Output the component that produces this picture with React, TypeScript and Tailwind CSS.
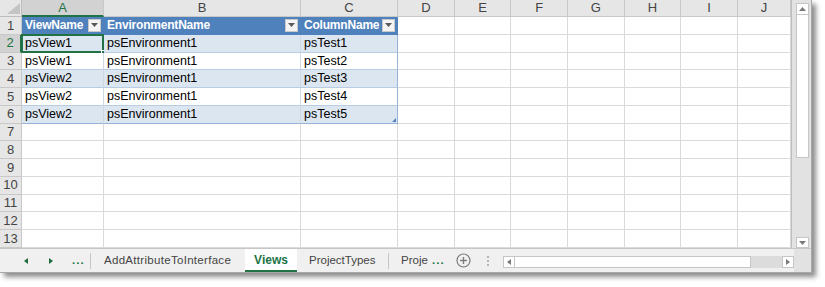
import React from "react"

const COLS = ["A", "B", "C", "D", "E", "F", "G", "H", "I", "J"]

const DATA = [
  ["psView1", "psEnvironment1", "psTest1"],
  ["psView1", "psEnvironment1", "psTest2"],
  ["psView2", "psEnvironment1", "psTest3"],
  ["psView2", "psEnvironment1", "psTest4"],
  ["psView2", "psEnvironment1", "psTest5"],
]

const HEADERS = ["ViewName", "EnvironmentName", "ColumnName"]

function FilterButton() {
  return (
    <div className="ml-auto mr-[2px] w-[13px] h-[13px] bg-[#f4f4f4] border border-[#c9c9c9] flex items-center justify-center shrink-0">
      <svg width="7" height="4" viewBox="0 0 7 4">
        <polygon points="0,0 7,0 3.5,4" fill="#595959" />
      </svg>
    </div>
  )
}

function Grid() {
  const cells: React.ReactNode[] = []

  // header row
  cells.push(
    <div key="corner" className="relative bg-[#e6e6e6] border-r border-b border-[#bdbdbd]">
      <svg className="absolute right-[1px] bottom-[2px]" width="13" height="11" viewBox="0 0 13 11">
        <polygon points="13,0 13,11 0,11" fill="#c4c4c4" />
      </svg>
    </div>
  )
  COLS.forEach((c, i) => {
    cells.push(
      <div
        key={"h" + c}
        className={
          i === 0
            ? "bg-[#d2d2d2] border-r border-[#c8c8c8] border-b-2 border-b-[#217346] flex items-center justify-center text-[13px] text-[#217346]"
            : "bg-[#e6e6e6] border-r border-b border-[#c8c8c8] flex items-center justify-center text-[13px] text-[#444]"
        }
      >
        {c}
      </div>
    )
  })

  for (let r = 1; r <= 13; r++) {
    cells.push(
      <div
        key={"r" + r}
        className={
          r === 2
            ? "bg-[#d2d2d2] border-b border-[#c8c8c8] border-r-2 border-r-[#217346] flex items-center justify-center text-[13px] text-[#217346]"
            : "bg-[#e6e6e6] border-r border-b border-[#c8c8c8] flex items-center justify-center text-[13px] text-[#444]"
        }
      >
        {r}
      </div>
    )
    COLS.forEach((c, ci) => {
      const inTable = ci < 3 && r <= 6
      if (r === 1 && ci < 3) {
        cells.push(
          <div
            key={c + r}
            className="bg-[#4f81bd] border-r border-b border-[#4f81bd] flex items-center pl-[3px] text-[12px] font-bold text-white whitespace-nowrap"
          >
            <span className="tracking-[-0.2px]">{HEADERS[ci]}</span>
            <FilterButton />
          </div>
        )
        return
      }
      if (inTable) {
        const band = r % 2 === 0
        const last = r === 6
        const right = ci === 2
        cells.push(
          <div
            key={c + r}
            className={
              (band ? "bg-[#dce6f1] " : "bg-white ") +
              (last ? "border-b-[#95b3d7] " : "border-b-[#b8cce4] ") +
              (right ? "border-r-[#95b3d7] " : "border-r-[#d0d7e5] ") +
              "relative border-r border-b flex items-center pl-[3px] text-[12.5px] text-black"
            }
          >
            {DATA[r - 2][ci]}
            {r === 2 && ci === 0 && (
              <>
                <div className="absolute left-[-1px] top-[-1px] right-[-1px] bottom-[-1px] border-2 border-[#217346]" />
                <div className="absolute right-[-3px] bottom-[-3px] w-[5px] h-[5px] bg-[#217346] border border-white" />
              </>
            )}
            {last && right && (
              <svg className="absolute right-[1px] bottom-[1px]" width="4" height="4" viewBox="0 0 4 4">
                <polygon points="4,0 4,4 0,4" fill="#4f81bd" />
              </svg>
            )}
          </div>
        )
        return
      }
      cells.push(<div key={c + r} className="bg-white border-r border-b border-[#dadada]" />)
    })
  }

  return (
    <div className="w-[792px] h-[248px] grid grid-cols-[22px_82px_197px_97px_repeat(6,56.67px)_1fr] grid-rows-[17px_repeat(13,17.75px)] overflow-hidden border-r border-[#bdbdbd]">
      {cells}
    </div>
  )
}

function VScroll() {
  return (
    <div className="w-[19px] h-[248px] bg-[#e2e2e2] flex flex-col pl-[4px] pr-[2px] pt-[3px]">
      <div className="h-[12px] bg-white border border-[#c6c6c6] flex items-center justify-center">
        <svg width="7" height="4" viewBox="0 0 7 4">
          <polygon points="3.5,0 7,4 0,4" fill="#7a7a7a" />
        </svg>
      </div>
      <div className="h-[143px] bg-white border border-[#c6c6c6] border-t-0" />
      <div className="flex-1" />
      <div className="h-[11px] bg-white border border-[#c6c6c6] flex items-center justify-center">
        <svg width="7" height="4" viewBox="0 0 7 4">
          <polygon points="0,0 7,0 3.5,4" fill="#7a7a7a" />
        </svg>
      </div>
    </div>
  )
}

function TabBar() {
  return (
    <div className="h-[24px] flex items-stretch bg-[#f0f0f0] border-t border-[#c6c6c6] text-[11.5px] text-[#444] whitespace-nowrap">
      <div className="w-[90px] flex items-center">
        <svg className="ml-[24px]" width="4" height="6" viewBox="0 0 4 6">
          <polygon points="4,0 4,6 0,3" fill="#1e6a3c" />
        </svg>
        <svg className="ml-[21px]" width="4" height="6" viewBox="0 0 4 6">
          <polygon points="0,0 4,3 0,6" fill="#1e6a3c" />
        </svg>
        <span className="ml-[19px] text-[#217346] font-bold tracking-[1px] leading-none">...</span>
      </div>
      <div className="w-px h-[16px] self-center bg-[#c6c6c6]" />
      <div className="w-[154px] flex items-center pl-[13px] tracking-[0.3px]">AddAttributeToInterface</div>
      <div className="w-[52px] flex items-center justify-center bg-white border-b-2 border-[#217346] font-bold text-[#217346] text-[12px]">
        Views
      </div>
      <div className="w-[91px] flex items-center pl-[12px]">ProjectTypes</div>
      <div className="w-px h-[16px] self-center bg-[#c6c6c6]" />
      <div className="w-[40px] flex items-center pl-[12px]">Proje</div>
      <div className="flex items-center ml-[3px] text-[#217346] font-bold tracking-[1px] leading-none">...</div>
      <div className="flex items-center ml-[11px]">
        <svg width="15" height="15" viewBox="0 0 15 15">
          <circle cx="7.5" cy="7.5" r="6.5" fill="none" stroke="#7a7a7a" strokeWidth="1.2" />
          <line x1="7.5" y1="4" x2="7.5" y2="11" stroke="#7a7a7a" strokeWidth="1.4" />
          <line x1="4" y1="7.5" x2="11" y2="7.5" stroke="#7a7a7a" strokeWidth="1.4" />
        </svg>
      </div>
      <div className="flex flex-col items-center justify-center gap-[2px] ml-[16px]">
        <div className="w-[2px] h-[2px] bg-[#b5b5b5]" />
        <div className="w-[2px] h-[2px] bg-[#b5b5b5]" />
        <div className="w-[2px] h-[2px] bg-[#b5b5b5]" />
      </div>
      <div className="ml-[14px] w-[291px] h-[12px] self-end mb-[4px] flex bg-[#dcdcdc]">
        <div className="w-[12px] h-full bg-white border border-[#c6c6c6] flex items-center justify-center">
          <svg width="4" height="6" viewBox="0 0 4 6">
            <polygon points="4,0 4,6 0,3" fill="#7a7a7a" />
          </svg>
        </div>
        <div className="w-[236px] h-full bg-white border border-[#c6c6c6] border-l-0" />
        <div className="flex-1" />
        <div className="w-[12px] h-full bg-white border border-[#c6c6c6] flex items-center justify-center">
          <svg width="4" height="6" viewBox="0 0 4 6">
            <polygon points="0,0 4,3 0,6" fill="#7a7a7a" />
          </svg>
        </div>
      </div>
      <div className="flex-1 bg-[#e2e2e2]" />
    </div>
  )
}

export default function App() {
  return (
    <div className="w-[825px] h-[287px] bg-white overflow-hidden font-['Liberation_Sans',Arial,sans-serif]">
      <div className="w-[812px] h-[273px] flex flex-col bg-[#e2e2e2] border-r border-b border-[#a8a8a8] shadow-[4px_4px_5px_rgba(0,0,0,0.45)]">
        <div className="flex">
          <Grid />
          <VScroll />
        </div>
        <TabBar />
      </div>
    </div>
  )
}
